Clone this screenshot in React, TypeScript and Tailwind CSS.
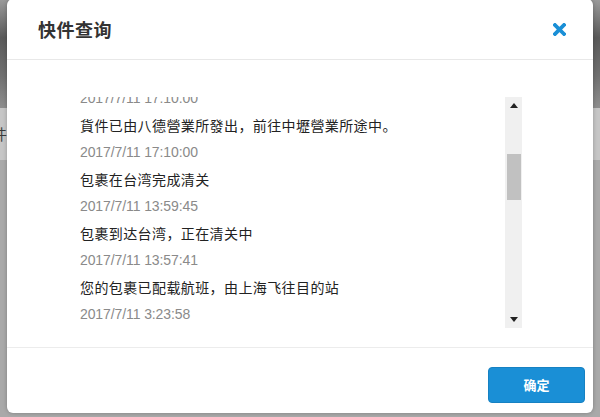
import React from "react";

const cjk = { fontFamily: '"Noto Sans CJK SC", "Noto Sans CJK TC", sans-serif' };
const ts = { fontFamily: '"Liberation Sans", "Noto Sans CJK SC", sans-serif' };

const rows: { t: "time" | "msg"; text: string }[] = [
  { t: "time", text: "2017/7/11 17:10:00" },
  { t: "msg", text: "貨件已由八德營業所發出，前往中壢營業所途中。" },
  { t: "time", text: "2017/7/11 17:10:00" },
  { t: "msg", text: "包裹在台湾完成清关" },
  { t: "time", text: "2017/7/11 13:59:45" },
  { t: "msg", text: "包裹到达台湾，正在清关中" },
  { t: "time", text: "2017/7/11 13:57:41" },
  { t: "msg", text: "您的包裹已配载航班，由上海飞往目的站" },
  { t: "time", text: "2017/7/11 3:23:58" },
];

export default function App() {
  return (
    <div className="relative w-[600px] h-[417px] overflow-hidden bg-[#a9a9a9]" style={cjk}>
      {/* dimmed page behind */}
      <div className="flex flex-col">
        <div className="h-[108px] bg-[linear-gradient(180deg,#9a9a9a_0%,#5a5a5a_35%,#707070_70%,#8e8e8e_100%)]" />
        <div className="h-[52px] bg-[#c6c6c6] flex items-center">
          <span className="-ml-[8px] text-[15px] text-[#3a3a3a]">件</span>
        </div>
      </div>

      {/* modal */}
      <div className="absolute left-[7px] top-[-1px] w-[586px] h-[414px] bg-white rounded-[6px] flex flex-col shadow-[0_0_4px_rgba(0,0,0,0.25)]">
        <div className="h-[61px] shrink-0 border-b border-[#e8e8e8] flex items-center justify-between pl-[31px] pr-[27px]">
          <span className="text-[18px] font-bold text-[#333] tracking-[0.5px]">快件查询</span>
          <svg width="13" height="13" viewBox="0 0 13 13">
            <path d="M2 2 L11 11 M11 2 L2 11" stroke="#1a8fd6" strokeWidth="3.8" strokeLinecap="square" />
          </svg>
        </div>

        <div className="flex pt-[37px] pl-[73px] h-[287px] shrink-0">
          <div className="w-[425px] h-[231px] overflow-hidden">
            <div className="-mt-[12px] flex flex-col">
              {rows.map((r, i) =>
                r.t === "time" ? (
                  <div key={i} className="h-[27px] leading-[27px] text-[14px] text-[#8a8a8a] tracking-[-0.1px]" style={ts}>
                    {r.text}
                  </div>
                ) : (
                  <div key={i} className="h-[27px] leading-[27px] text-[14px] text-[#222] tracking-[0.4px]">
                    {r.text}
                  </div>
                )
              )}
            </div>
          </div>
          <div className="w-[17px] h-[231px] bg-[#f0f0f0] flex flex-col items-center">
            <div className="h-[17px] w-full flex items-center justify-center">
              <svg width="8" height="5" viewBox="0 0 8 5"><path d="M0 5 L4 0 L8 5 Z" fill="#222" /></svg>
            </div>
            <div className="h-[40px]" />
            <div className="w-[14px] h-[46px] bg-[#c1c1c1]" />
            <div className="flex-1" />
            <div className="h-[17px] w-full flex items-center justify-center">
              <svg width="8" height="5" viewBox="0 0 8 5"><path d="M0 0 L8 0 L4 5 Z" fill="#222" /></svg>
            </div>
          </div>
        </div>

        <div className="border-t border-[#ececec] flex-1 flex justify-end items-start pt-[19px] pr-[8px]">
          <button className="w-[97px] h-[36px] rounded-[4px] bg-[#1a8fd6] border border-[#1681c2] text-white text-[13px] font-bold">
            确定
          </button>
        </div>
      </div>
    </div>
  );
}
